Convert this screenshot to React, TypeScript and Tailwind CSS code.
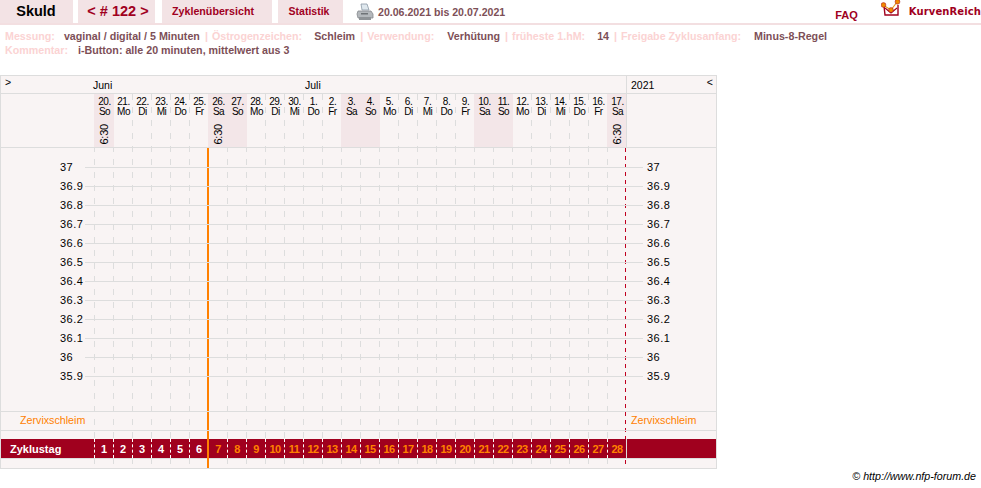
import React from 'react';

const days = [
  ['20', 'So'], ['21', 'Mo'], ['22', 'Di'], ['23', 'Mi'], ['24', 'Do'], ['25', 'Fr'], ['26', 'Sa'],
  ['27', 'So'], ['28', 'Mo'], ['29', 'Di'], ['30', 'Mi'], ['1', 'Do'], ['2', 'Fr'], ['3', 'Sa'],
  ['4', 'So'], ['5', 'Mo'], ['6', 'Di'], ['7', 'Mi'], ['8', 'Do'], ['9', 'Fr'], ['10', 'Sa'],
  ['11', 'So'], ['12', 'Mo'], ['13', 'Di'], ['14', 'Mi'], ['15', 'Do'], ['16', 'Fr'], ['17', 'Sa'],
];
const times = [0, 6, 27];
const temps = ['37', '36.9', '36.8', '36.7', '36.6', '36.5', '36.4', '36.3', '36.2', '36.1', '36', '35.9'];

const PrinterIcon = () => (
  <svg width="18" height="18" viewBox="0 0 18 18">
    <path d="M5 1 L11 1 L13 7 L6 7 Z" fill="#dfe8ee" stroke="#8a98a4" strokeWidth="0.8" />
    <path d="M2 8 L15 8 L17 11 L17 15 L2 15 L1 11 Z" fill="#b4b8bc" stroke="#85898d" strokeWidth="0.8" />
    <rect x="3" y="14" width="12" height="3" fill="#8f9397" />
    <rect x="5" y="10" width="7" height="1.5" fill="#6f7377" />
  </svg>
);

const KurvenLogo = () => (
  <svg width="22" height="20" viewBox="0 0 22 20">
    <path d="M3 7 L4 16 L17 16 L17 6" fill="#fff" stroke="#a0001e" strokeWidth="1.4" />
    <path d="M4 9 L10 14 L16 9" fill="none" stroke="#a0001e" strokeWidth="1.2" />
    <path d="M2 6 L10 11 L16 3" fill="none" stroke="#e8a020" strokeWidth="1.2" />
    <circle cx="2.5" cy="6" r="2.4" fill="#f08a00" stroke="#a0001e" strokeWidth="0.5" />
    <circle cx="10" cy="11" r="2.4" fill="#f08a00" stroke="#a0001e" strokeWidth="0.5" />
    <circle cx="16.5" cy="2.8" r="2.4" fill="#f08a00" stroke="#a0001e" strokeWidth="0.5" />
  </svg>
);

const Tab: React.FC<{ className: string; children: React.ReactNode }> = ({ className, children }) => (
  <div className={`h-[23px] bg-[#f3e3e5] flex items-center justify-center font-bold ${className}`}>{children}</div>
);

const Label: React.FC<{ ml: string; children: React.ReactNode }> = ({ ml, children }) => (
  <span className={`text-[#fbd3d3] ${ml}`}>{children}</span>
);
const Val: React.FC<{ ml: string; children: React.ReactNode }> = ({ ml, children }) => (
  <span className={`text-[#7d4f57] ${ml}`}>{children}</span>
);

export default function App() {
  return (
    <div className="w-[981px] h-[488px] overflow-hidden bg-white font-['Liberation_Sans',Arial,sans-serif] text-[11px]">
      {/* Kopfzeile */}
      <div className="flex h-[25px] border-b-2 border-[#f3dfe1] text-[#a0001e]">
        <Tab className="w-[73px] text-[14.5px] text-black pr-[1px]">Skuld</Tab>
        <Tab className="w-[77px] ml-[5px] text-[14.5px] pl-[3px]">&lt; # 122 &gt;</Tab>
        <Tab className="w-[110px] ml-[7px] text-[10.7px] pr-[8px]">Zyklenübersicht</Tab>
        <Tab className="w-[65px] ml-[6px] text-[10.5px] pr-[3px]">Statistik</Tab>
        <div className="ml-[13px] mt-[3px] h-[18px]"><PrinterIcon /></div>
        <div className="ml-[4px] h-[25px] flex items-center font-bold text-[#7d4f57] text-[10.6px]">20.06.2021 bis 20.07.2021</div>
        <div className="ml-[330px] mt-[7px] font-bold">FAQ</div>
        <div className="ml-[23px] -mt-[1px] h-[20px]"><KurvenLogo /></div>
        <div className="ml-[6px] mt-[4px] font-bold text-[10px] font-['DejaVu_Sans',sans-serif] tracking-[0.1px]">KurvenReich</div>
      </div>

      {/* Angaben */}
      <div className="h-[50px] pt-[4px] pl-[5px] font-bold text-[10.7px] leading-[14px]">
        <div className="whitespace-nowrap flex">
          <Label ml="">Messung:</Label>
          <Val ml="ml-[9px]">vaginal / digital / 5 Minuten</Val>
          <Label ml="ml-[5px]">|</Label>
          <Label ml="ml-[4px]">Östrogenzeichen:</Label>
          <Val ml="ml-[12px]">Schleim</Val>
          <Label ml="ml-[5px]">|</Label>
          <Label ml="ml-[4px]">Verwendung:</Label>
          <Val ml="ml-[13px]">Verhütung</Val>
          <Label ml="ml-[5px]">|</Label>
          <Label ml="ml-[4px]">früheste 1.hM:</Label>
          <Val ml="ml-[12px]">14</Val>
          <Label ml="ml-[5px]">|</Label>
          <Label ml="ml-[4px]">Freigabe Zyklusanfang:</Label>
          <Val ml="ml-[13px]">Minus-8-Regel</Val>
        </div>
        <div className="whitespace-nowrap flex">
          <Label ml="">Kommentar:</Label>
          <Val ml="ml-[10px]">i-Button: alle 20 minuten, mittelwert aus 3</Val>
        </div>
      </div>

      {/* Kurve */}
      <div className="relative w-[717px] h-[394px] bg-[#f9f4f4] border border-[#dddddd] text-black">
        <div className="flex h-[18px] border-b border-[#dddddd] items-center text-[10.5px]">
          <div className="w-[92px] pl-[4px] -mt-[3px]">&gt;</div>
          <div className="w-[212px] pt-[2px]">Juni</div>
          <div className="w-[321px] pt-[2px]">Juli</div>
          <div className="flex-1 pl-[4px] border-l border-[#dddddd] h-full flex items-center justify-between pr-[3px]">
            <span className="pt-[2px]">2021</span>
            <span className="-mt-[3px]">&lt;</span>
          </div>
        </div>

        <div className="relative z-[1] flex h-[54px] border-b border-[#dddddd]">
          <div className="w-[93px]" />
          {days.map(([d, w], i) => (
            <div
              key={i}
              className={`flex flex-col items-center pt-[3px] text-[10px] leading-[10px] tracking-[-0.5px] ${
                w === 'Sa' || w === 'So' ? 'w-[20px] -mr-px pl-[2px] pr-[1px] bg-[#f3e6e8]' : 'w-[19px] pl-[2px]'
              }`}
            >
              <span>{d}.</span>
              <span>{w}</span>
              {times.includes(i) && (
                <span className="mt-[7px] [writing-mode:vertical-rl] rotate-180 text-[11px] tracking-[-0.2px] leading-[11px]">6:30</span>
              )}
            </div>
          ))}
          <div className="flex-1 border-l border-[#dddddd]" />
        </div>

        {/* Temperaturen */}
        <div className="relative z-20 h-[263px] pt-[10px] text-[11px] tracking-[0.5px]">
          {temps.map((t) => (
            <div key={t} className="flex items-center h-[19px]">
              <div className="w-[84px] pl-[59px] shrink-0">{t}</div>
              <div className="w-[558px] h-px bg-[#dddddd] shrink-0" />
              <div className="pl-[4px]">{t}</div>
            </div>
          ))}
        </div>

        <div className="relative z-20 flex items-center h-[20px] pb-[2px] border-t border-b border-[#dddddd] text-[#ff8000] text-[10.7px]">
          <div className="w-[625px] pl-[19px]">Zervixschleim</div>
          <div className="pl-[5px]">Zervixschleim</div>
        </div>

        {/* Zyklustag */}
        <div className="relative z-10 mt-[8px] flex h-[20px] bg-[#a0001e] font-bold items-center border-b border-[#dddddd]">
          <div className="w-[93px] pl-[9px] pt-[2px] text-white">Zyklustag</div>
          {days.map((_, i) => (
            <div
              key={i}
              className={`w-[19px] h-full pt-[1px] flex items-center justify-center border-l border-dashed border-white ${
                i < 6 ? 'text-white' : 'text-[#ff8000] tracking-[-0.6px]'
              }`}
            >
              {i + 1}
            </div>
          ))}
          <div className="flex-1 h-full border-l border-[#dddddd]" />
        </div>

        {/* Hilfslinien der Tage */}
        <svg className="absolute left-0 top-[18px] z-0" width="715" height="374" viewBox="0 0 715 374">
          {days.map((_, i) => (
            <line key={i} x1={93.5 + i * 19} x2={93.5 + i * 19} y1="0" y2="374" stroke="#dddddd" strokeDasharray="6 7" />
          ))}
          <line x1="624.5" x2="624.5" y1="54" y2="374" stroke="#c00020" strokeDasharray="4 4" />
        </svg>

        {/* Eisprung-Markierung */}
        <div className="absolute left-[206px] top-[72px] bottom-0 w-[2px] bg-[#ff8000] z-10" />
      </div>

      <div className="w-[976px] -mt-[1px] text-right italic text-[10.7px] text-black">© http://www.nfp-forum.de</div>
    </div>
  );
}
